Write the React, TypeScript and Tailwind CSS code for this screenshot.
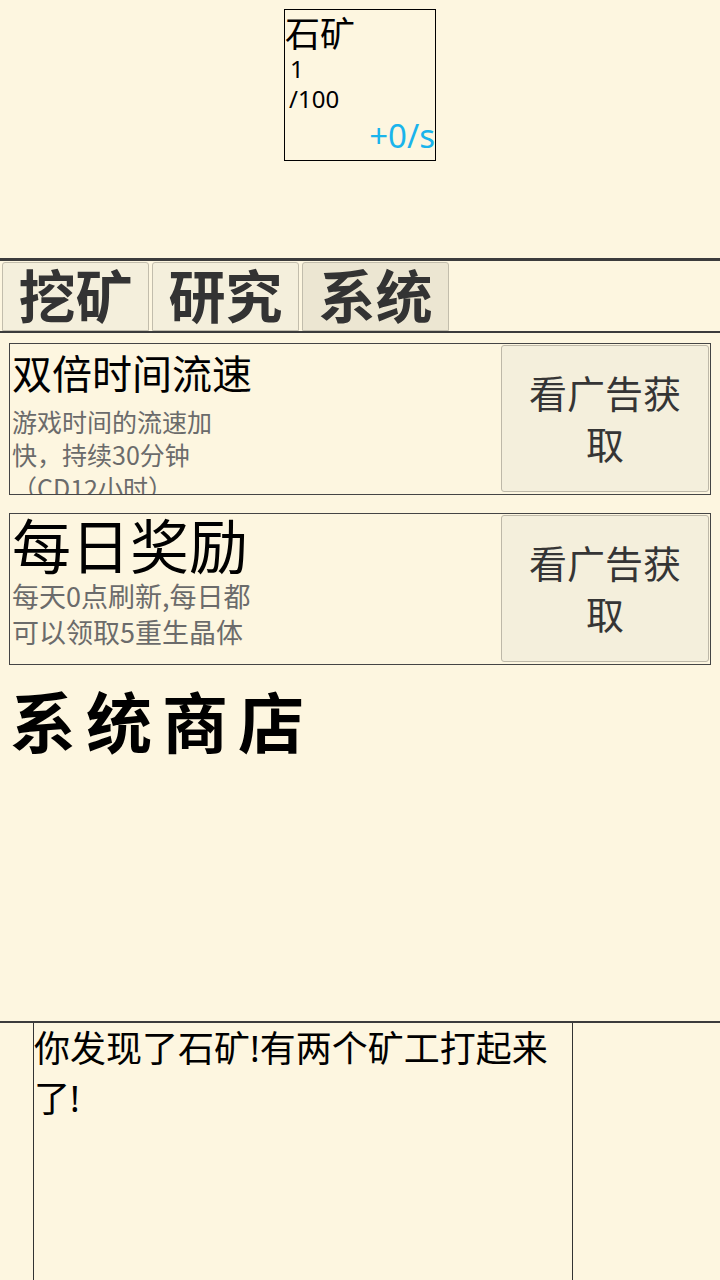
import React from "react";

const font = { fontFamily: '"Noto Sans", "Noto Sans CJK SC", sans-serif' };
const cjk = { fontFamily: '"Noto Sans CJK SC", "Noto Sans", sans-serif' };

function AdCard({ title, titleSize, desc, descClass }: { title: string; titleSize: string; desc: string; descClass: string }) {
  return (
    <div className="mx-[9px] h-[152px] border border-[#454545] flex overflow-hidden">
      <div className="flex-1 pl-[2px] overflow-hidden">
        <div className={`${titleSize} text-black whitespace-nowrap`}>{title}</div>
        <div className={`${descClass} text-[#6b6b6b]`} style={cjk}>
          {desc}
        </div>
      </div>
      <button className="w-[208px] h-[147px] mt-[1px] mr-[1px] rounded-[3px] border border-[#bdb8a8] bg-[#f4efdc] text-[38px] leading-[51px] text-[#353535] px-[20px]">
        看广告获取
      </button>
    </div>
  );
}

export default function App() {
  return (
    <div className="w-[720px] h-[1280px] bg-[#fdf6e0] overflow-hidden flex flex-col" style={font}>
      <div className="h-[258px] pt-[9px] flex justify-center">
        <div className="w-[152px] h-[152px] border border-black flex flex-col">
          <div className="text-[35px] leading-[40px] text-black pt-[4px]">石矿</div>
          <div className="text-[24px] leading-[30px] text-black pl-[5px]">1</div>
          <div className="text-[24px] leading-[30px] text-black pl-[4px]">/100</div>
          <div className="text-[33px] leading-[40px] text-[#1ab4ec] text-right mt-[2px]">+0/s</div>
        </div>
      </div>
      <div className="h-[3px] bg-[#3c3c3c]" />
      <div className="h-[70px] flex gap-[3px] pl-[2px] pt-[1px]">
        {["挖矿", "研究", "系统"].map((t, i) => (
          <div
            key={t}
            className={`w-[147px] h-[69px] rounded-t-[3px] border border-[#c2bdac] flex items-center justify-center text-[57px] leading-[69px] font-bold text-[#333333] ${i === 2 ? "bg-[#ece6d2]" : "bg-[#f4efdc]"}`}
          >
            {t}
          </div>
        ))}
      </div>
      <div className="h-[2px] bg-[#3c3c3c]" />
      <div className="h-[10px]" />
      <AdCard title="双倍时间流速" titleSize="text-[40px] leading-[60px]" desc="游戏时间的流速加快，持续30分钟（CD12小时）" descClass="w-[220px] text-[25px] leading-[33px] pt-[1px]" />
      <div className="h-[18px]" />
      <AdCard title="每日奖励" titleSize="text-[59px] leading-[64px]" desc="每天0点刷新,每日都可以领取5重生晶体" descClass="w-[255px] text-[27px] leading-[36px]" />
      <div className="pl-[10px] pt-[14px] text-[66px] leading-[86px] font-bold tracking-[10px] text-black">系统商店</div>
      <div className="flex-1" />
      <div className="h-[2px] bg-[#3c3c3c]" />
      <div className="h-[257px] ml-[33px] w-[540px] border-x border-[#333333] text-[36px] leading-[50px] text-black pt-[1px]">
        你发现了石矿!有两个矿工打起来了!
      </div>
    </div>
  );
}
